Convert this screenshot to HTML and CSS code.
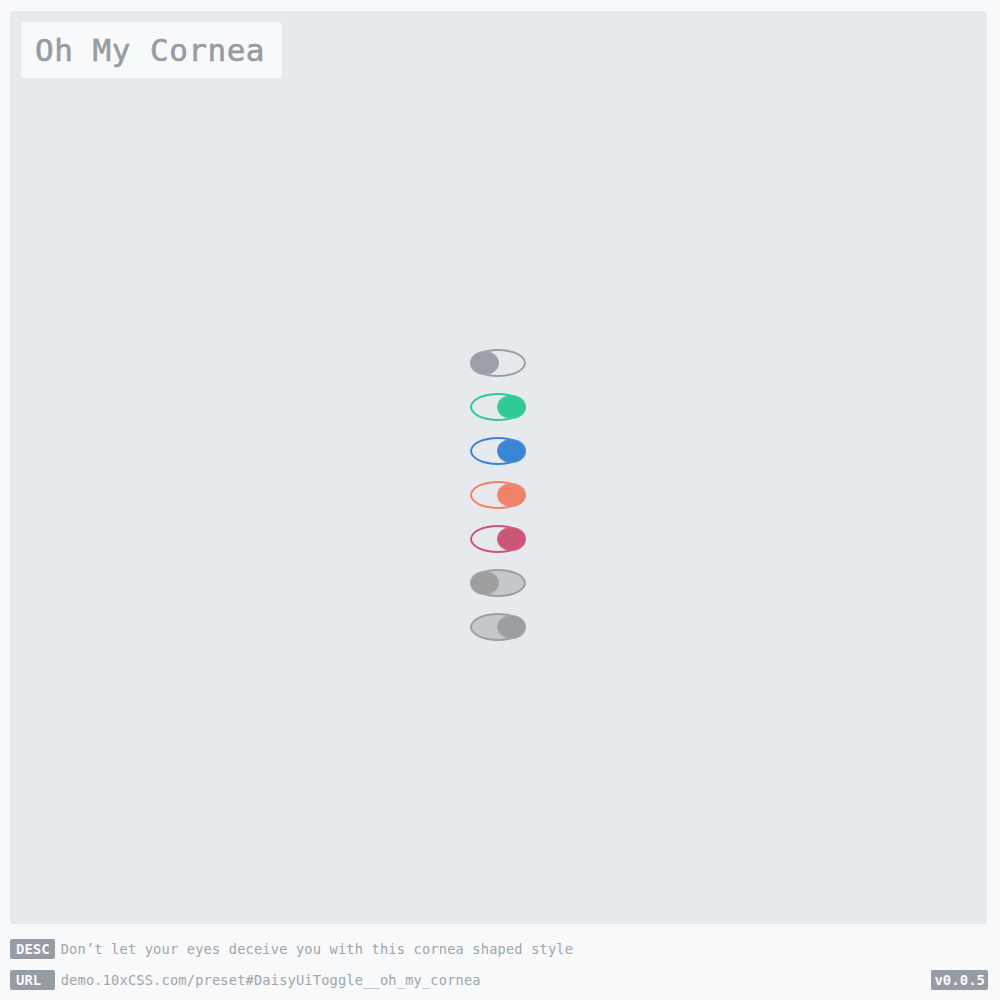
FILE: index.html
```html
<!DOCTYPE html>
<html>
<head>
<meta charset="utf-8">
<link rel="stylesheet" href="styles.css">
</head>
<body>
<div class="page">
  <main class="panel">
    <div class="title">Oh My Cornea</div>
    <div class="stage">
      <div class="toggles">
        <span class="toggle t-gray"><span class="knob"></span></span>
        <span class="toggle t-green on"><span class="knob"></span></span>
        <span class="toggle t-blue on"><span class="knob"></span></span>
        <span class="toggle t-orange on"><span class="knob"></span></span>
        <span class="toggle t-pink on"><span class="knob"></span></span>
        <span class="toggle t-dis"><span class="knob"></span></span>
        <span class="toggle t-dis on"><span class="knob"></span></span>
      </div>
    </div>
  </main>
  <footer class="footer">
    <div class="row"><span class="tag">DESC</span><span class="text">Don’t let your eyes deceive you with this cornea shaped style</span></div>
    <div class="row"><span class="tag">URL&nbsp;</span><span class="text">demo.10xCSS.com/preset#DaisyUiToggle__oh_my_cornea</span><span class="ver">v0.0.5</span></div>
  </footer>
</div>
</body>
</html>
```
FILE: styles.css
```css
html, body {
  margin: 0;
  padding: 0;
  background: #f8f9fb;
}
body {
  font-family: "DejaVu Sans Mono", "Liberation Mono", monospace;
}
.page {
  width: 1000px;
  height: 1000px;
  box-sizing: border-box;
  padding: 11px 13px 0 10px;
  display: flex;
  flex-direction: column;
}
.panel {
  height: 913px;
  background: #e6e9ee;
  border-radius: 4px;
  padding: 11px;
  box-sizing: border-box;
  display: flex;
  flex-direction: column;
}
.title {
  align-self: flex-start;
  background: #f8f9fb;
  border-radius: 4px;
  width: 261px;
  height: 56px;
  box-sizing: border-box;
  padding-left: 14px;
  display: flex;
  align-items: center;
  font-size: 31px;
  font-weight: 400;
  color: #959ca3;
  letter-spacing: 0.5px;
  -webkit-text-stroke: 0.6px #959ca3;
}
.stage {
  flex: 1;
  display: flex;
  justify-content: center;
  padding-top: 271px;
}
.toggles {
  display: flex;
  flex-direction: column;
  gap: 16px;
  margin-left: -2px;
}
.toggle {
  display: flex;
  width: 56px;
  height: 28px;
  box-sizing: border-box;
  border: 2px solid #9aa0a6;
  border-radius: 50%;
  padding: 0;
  position: relative;
}
.knob {
  width: 29px;
  height: 24px;
  border-radius: 50%;
  background: #9aa0a6;
  margin-left: -2px;
  box-shadow: inset 0 0 0 1px rgba(255, 255, 255, 0.12);
}
.toggle.on .knob {
  margin-left: auto;
  margin-right: -2px;
}
.t-green { border-color: #2fcb94; }
.t-green .knob { background: #2fcb94; }
.t-blue { border-color: #3a84d6; }
.t-blue .knob { background: #3a84d6; }
.t-orange { border-color: #f0826a; }
.t-orange .knob { background: #f0826a; }
.t-pink { border-color: #cc5577; }
.t-pink .knob { background: #cc5577; }
.t-dis { border-color: #9c9ea1; background: #c4c7cb; }
.t-dis .knob { background: #9d9ea0; }
.footer {
  display: flex;
  flex-direction: column;
  gap: 11px;
  padding-top: 15px;
}
.row {
  display: flex;
  align-items: center;
  height: 20px;
  font-size: 14px;
}
.tag {
  background: #959ca3;
  color: #f8f9fb;
  font-weight: 700;
  padding: 0 5px 0 6px;
  height: 20px;
  line-height: 20px;
  border-radius: 2px;
  font-size: 14px;
}
.text {
  color: #a0a5aa;
  margin-left: 6px;
  font-size: 13.7px;
  letter-spacing: 0.16px;
}
.ver {
  margin-left: auto;
  margin-right: -1px;
  background: #959ca3;
  color: #f8f9fb;
  font-weight: 700;
  padding: 0 3px;
  height: 20px;
  line-height: 20px;
  border-radius: 2px;
}
```
